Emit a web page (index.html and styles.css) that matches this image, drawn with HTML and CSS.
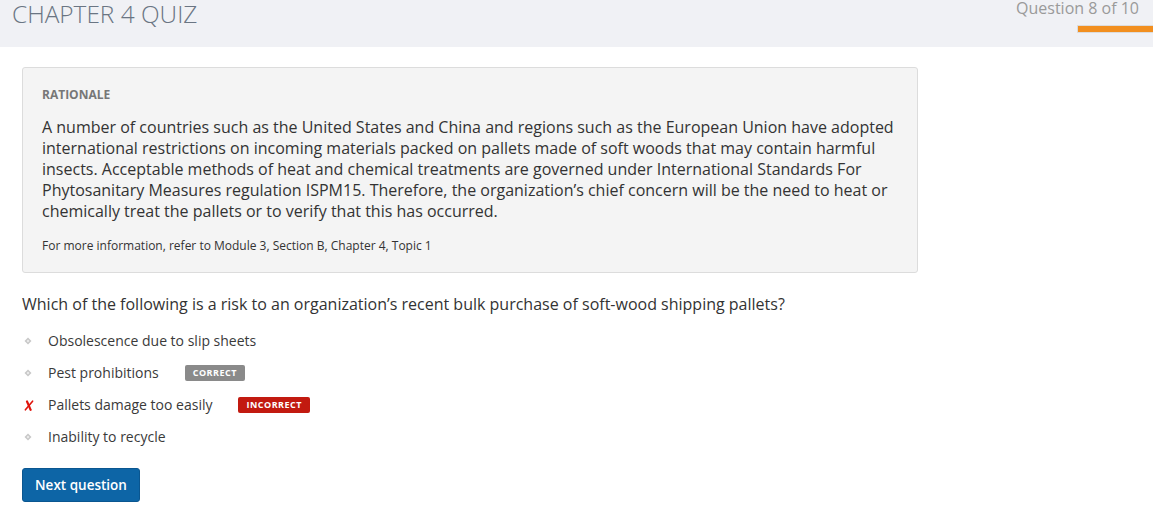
FILE: index.html
```html
<!DOCTYPE html>
<html>
<head>
<meta charset="utf-8">
<link rel="stylesheet" href="styles.css">
</head>
<body>
<header class="topbar">
  <h1 class="title">CHAPTER 4 QUIZ</h1>
  <div class="progress">
    <div class="progress-label">Question 8 of 10</div>
    <div class="progress-bar"></div>
  </div>
</header>
<main class="content">
  <section class="rationale">
    <h2 class="rationale-head">RATIONALE</h2>
    <p class="rationale-text">A number of countries such as the United States and China and regions such as the European Union have adopted international restrictions on incoming materials packed on pallets made of soft woods that may contain harmful insects. Acceptable methods of heat and chemical treatments are governed under International Standards For Phytosanitary Measures regulation ISPM15. Therefore, the organization’s chief concern will be the need to heat or chemically treat the pallets or to verify that this has occurred.</p>
    <p class="rationale-ref">For more information, refer to Module 3, Section B, Chapter 4, Topic 1</p>
  </section>
  <p class="question">Which of the following is a risk to an organization’s recent bulk purchase of soft-wood shipping pallets?</p>
  <ul class="options">
    <li class="option"><span class="mark"><svg width="8" height="8" viewBox="0 0 8 8"><path d="M4 0.5 L7.5 4 L4 7.5 L0.5 4 Z" fill="#c8c8c8"/><path d="M4 2.6 L5.4 4 L4 5.4 L2.6 4 Z" fill="#eeeeee"/></svg></span><span class="label">Obsolescence due to slip sheets</span></li>
    <li class="option"><span class="mark"><svg width="8" height="8" viewBox="0 0 8 8"><path d="M4 0.5 L7.5 4 L4 7.5 L0.5 4 Z" fill="#c8c8c8"/><path d="M4 2.6 L5.4 4 L4 5.4 L2.6 4 Z" fill="#eeeeee"/></svg></span><span class="label">Pest prohibitions</span><span class="badge badge-correct">CORRECT</span></li>
    <li class="option"><span class="mark"><svg width="10" height="11" viewBox="0 0 10 11"><path d="M3 1.5 C4.2 4 5.4 7 6.6 9.8" stroke="#e0140c" stroke-width="2.2" fill="none" stroke-linecap="round"/><path d="M8.6 1.2 C6.2 4 3.8 7 1.4 9.8" stroke="#e0140c" stroke-width="1.6" fill="none" stroke-linecap="round"/></svg></span><span class="label">Pallets damage too easily</span><span class="badge badge-incorrect">INCORRECT</span></li>
    <li class="option"><span class="mark"><svg width="8" height="8" viewBox="0 0 8 8"><path d="M4 0.5 L7.5 4 L4 7.5 L0.5 4 Z" fill="#c8c8c8"/><path d="M4 2.6 L5.4 4 L4 5.4 L2.6 4 Z" fill="#eeeeee"/></svg></span><span class="label">Inability to recycle</span></li>
  </ul>
  <button class="next-btn">Next question</button>
</main>
</body>
</html>
```

FILE: styles.css
```css
* { box-sizing: border-box; }
html, body { margin: 0; padding: 0; background: #fff; }
body {
  font-family: "Open Sans", "Liberation Sans", sans-serif;
  color: #3a3a3a;
}
.topbar {
  height: 47px;
  background: #f0f1f5;
  display: flex;
  justify-content: space-between;
  align-items: flex-start;
}
.title {
  margin: 0;
  padding-left: 12px;
  font-size: 24.4px;
  font-weight: 300;
  line-height: 28px;
  color: #6a7583;
}
.progress {
  display: flex;
  flex-direction: column;
  align-items: flex-end;
}
.progress-label {
  font-size: 16px;
  line-height: 16px;
  color: #9a9a9a;
  padding-right: 14px;
}
.progress-bar {
  margin-top: 9px;
  width: 76px;
  height: 8px;
  background: #f28f1f;
  border: 1px solid #dcdcdc;
  border-right: none;
  border-radius: 1px 0 0 1px;
}
.content {
  padding: 20px 0 0 22px;
  width: 918px;
}
.rationale {
  background: #f4f4f4;
  border: 1px solid #dcdcdc;
  border-radius: 3px;
  padding: 18px 20px 18px 19px;
}
.rationale-head {
  margin: 0;
  font-size: 12px;
  line-height: 17px;
  font-weight: 700;
  color: #777;
}
.rationale-text {
  margin: 14px 0 0;
  font-size: 16px;
  line-height: 21px;
  color: #333;
}
.rationale-ref {
  margin: 15px 0 0;
  font-size: 12px;
  line-height: 17px;
  color: #333;
}
.question {
  margin: 20px 0 0;
  font-size: 16px;
  line-height: 22px;
  color: #333;
}
.options {
  list-style: none;
  margin: 10px 0 0;
  padding: 0;
}
.option {
  height: 32px;
  display: flex;
  align-items: center;
  font-size: 14px;
  color: #3a3a3a;
}
.mark {
  width: 26px;
  display: flex;
  align-items: center;
  justify-content: flex-start;
  padding-left: 2px;
}
.label { line-height: 20px; }
.badge {
  margin-left: 26px;
  font-size: 9px;
  font-weight: 700;
  color: #fff;
  letter-spacing: 0.5px;
  line-height: 16px;
  height: 16px;
  padding: 0 8px;
  border-radius: 2px;
}
.badge-correct { background: #8a8a8a; }
.badge-incorrect { background: #c21a10; }
.next-btn {
  margin-top: 15px;
  height: 34px;
  width: 118px;
  padding: 0;
  background: #0d65a6;
  color: #fff;
  border: 1px solid #0a5690;
  border-radius: 3px;
  font-family: "Open Sans", "Liberation Sans", sans-serif;
  font-size: 13.5px;
  font-weight: 600;
}
```
